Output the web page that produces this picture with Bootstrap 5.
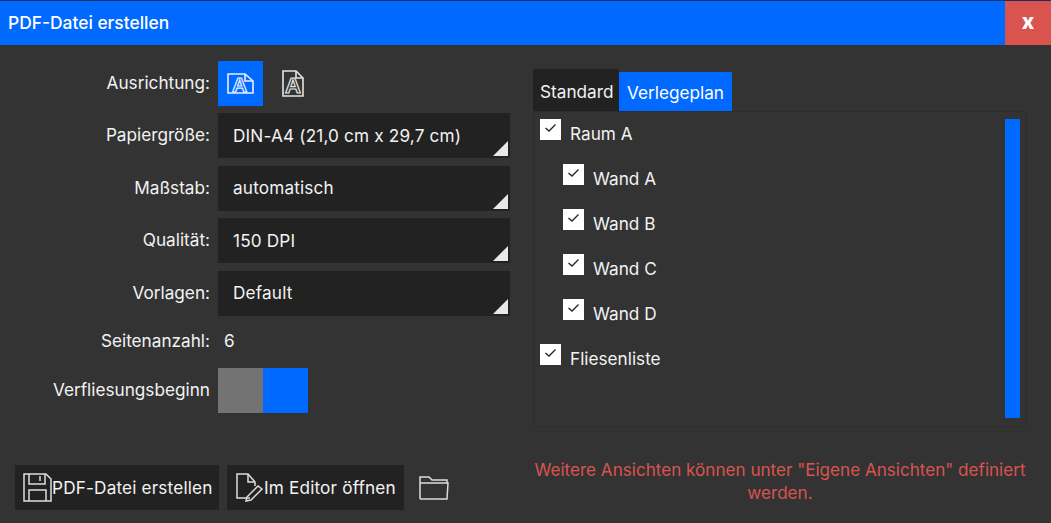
<!DOCTYPE html>
<html lang="de"><head><meta charset="utf-8"><title>PDF-Datei erstellen</title>
<link href="https://cdn.jsdelivr.net/npm/bootstrap@5.3.0/dist/css/bootstrap.min.css" rel="stylesheet">
<style>
html,body{height:100%;margin:0;overflow:hidden}
body{background:#333;color:#f2f2f2;font-family:"Inter","Noto Sans",sans-serif;font-size:17.2px;line-height:1.2}
.dlg{width:1051px;height:523px;display:flex;flex-direction:column;border-top:1px solid #16305c}
.dlg-head{height:44px;background:#0069ff;display:flex;align-items:center;justify-content:space-between;flex:none}
.dlg-title{padding-left:8px;font-size:17.4px;font-weight:500;color:#fff}
.dlg-x{width:46px;height:44px;background:#d9534f;color:#fff;font-weight:800;font-size:21px;border:0;padding:0 0 3px}
.dlg-body{flex:1;display:flex;min-height:0}
.lft{width:533px;flex:none;padding:15.5px 0 13px 15px;display:flex;flex-direction:column}
.rgt{flex:1;padding-top:24px;padding-right:24px;display:flex;flex-direction:column}
.frow{display:flex;align-items:center;margin-bottom:7.5px;min-height:45px}
.frow-text{min-height:37px;margin-bottom:8px}
.flab{width:195px;text-align:right;flex:none;margin-right:8px;white-space:nowrap}
.pagecount{padding-left:6px}
.sel{width:292px;height:45px;background:#222;color:#f2f2f2;position:relative;display:flex;align-items:center;padding:1px 0 0 15px;letter-spacing:.16px}
.sel::after{content:"";position:absolute;right:2px;bottom:2px;border-style:solid;border-width:0 0 15px 15px;border-color:transparent transparent #e8e8e8 transparent}
.sq{width:45px;height:45px;display:flex;align-items:center;justify-content:center}
.sq-on{background:#0069ff}.sq-off{background:#737373}
.sq-shift{padding-left:15px}
.ico-text{font-family:"Liberation Sans",sans-serif;font-weight:700;fill:none}
.tabbar{display:flex;align-items:flex-end;height:42px}
.tb{display:flex;align-items:center;white-space:nowrap}
.tb-a{height:42px;width:86px;background:#222;padding:5px 0 0 7px}
.tb-b{height:39px;background:#0069ff;color:#fff;padding:3px 0 0 8px;width:113px}
.tree{height:316px;border:1px solid #2e2e2e;position:relative;padding:7px 0 0 6px}
.trow{display:flex;align-items:flex-start;height:45px}
.trow.sub{padding-left:23px}
.cbx{width:21px;height:21px;background:#fff;flex:none;margin-right:9px;display:flex;align-items:center;justify-content:center;padding-bottom:3px}
.tlab{padding-top:5px}
.scr{position:absolute;right:6px;top:7px;width:15px;height:299px;background:#0069ff}
.foot{margin-top:auto;display:flex;align-items:center}
.fbtn{height:45px;background:#222;color:#f2f2f2;display:flex;align-items:center;border:0;padding:0 0 0 8px;font-size:17.2px;white-space:nowrap;letter-spacing:.16px}
.fbtn-lab{padding-top:2px}
.fbtn-a{width:204px}.fbtn-b{width:177px}
.fold{margin-left:15px}
.note{color:#d9534f;text-align:center;margin:31px -20px 0;line-height:23px;font-size:17.1px}
</style></head><body>
<div class="dlg">
<div class="dlg-head"><div class="dlg-title">PDF-Datei erstellen</div><button class="dlg-x">x</button></div>
<div class="dlg-body">
<div class="lft">
<div class="frow"><div class="flab">Ausrichtung:</div><div class="sq sq-on">
<svg width="27" height="21" viewBox="0 0 27 21" fill="none" stroke="#e8f0ff" stroke-width="1.6"><path d="M1 1H18L26 8V20H1Z"/><path d="M18 1V8H26"/><text class="ico-text" x="5" y="18.5" font-size="21" stroke="#e8f0ff" stroke-width="1.2">A</text></svg></div>
<div class="sq sq-shift"><svg width="22" height="27" viewBox="0 0 22 27" fill="none" stroke="#e4e4e4" stroke-width="1.6"><path d="M1 1H14L21 8V26H1Z"/><path d="M14 1V8H21"/><text class="ico-text" x="3" y="23" font-size="22" stroke="#e4e4e4" stroke-width="1.2">A</text></svg></div></div>
<div class="frow"><div class="flab">Papiergröße:</div><div class="sel">DIN-A4 (21,0 cm x 29,7 cm)</div></div>
<div class="frow"><div class="flab">Maßstab:</div><div class="sel">automatisch</div></div>
<div class="frow"><div class="flab">Qualität:</div><div class="sel">150 DPI</div></div>
<div class="frow"><div class="flab">Vorlagen:</div><div class="sel">Default</div></div>
<div class="frow frow-text"><div class="flab">Seitenanzahl:</div><div class="pagecount">6</div></div>
<div class="frow"><div class="flab">Verfliesungsbeginn</div><div class="sq sq-off"></div><div class="sq sq-on"></div></div>
<div class="foot">
<button class="fbtn fbtn-a"><svg width="29" height="29" viewBox="0 0 29 29" fill="none" stroke="#ddd" stroke-width="1.5"><path d="M1 1H23L28 6V28H1Z"/><path d="M6 1V11H22V1M17 3V8"/><path d="M6 28V17H23V28"/></svg><span class="fbtn-lab">PDF-Datei erstellen</span></button>
<button class="fbtn fbtn-b ms-2"><svg width="29" height="29" viewBox="0 0 29 29" fill="none" stroke="#ddd" stroke-width="1.5"><path d="M15 25H2V1H13L20 9V13"/><path d="M13 1V9H20"/><path d="M12 24L23 13L27 16L16 27L11 28Z"/></svg><span class="fbtn-lab">Im Editor öffnen</span></button>
<svg class="fold" width="30" height="25" viewBox="0 0 30 25" fill="none" stroke="#ddd" stroke-width="1.5"><path d="M1 24V2H10L13 5H28V8"/><path d="M1 8H29L28 24H1"/></svg>
</div>
</div>
<div class="rgt">
<div class="tabbar"><div class="tb tb-a">Standard</div><div class="tb tb-b">Verlegeplan</div></div>
<div class="tree"><div class="scr"></div>
<div class="trow"><div class="cbx"><svg width="11" height="8" viewBox="0 0 11 8" fill="none" stroke="#222" stroke-width="1.3"><path d="M.5 4L4 7L10.5 .5"/></svg></div><div class="tlab">Raum A</div></div>
<div class="trow sub"><div class="cbx"><svg width="11" height="8" viewBox="0 0 11 8" fill="none" stroke="#222" stroke-width="1.3"><path d="M.5 4L4 7L10.5 .5"/></svg></div><div class="tlab">Wand A</div></div>
<div class="trow sub"><div class="cbx"><svg width="11" height="8" viewBox="0 0 11 8" fill="none" stroke="#222" stroke-width="1.3"><path d="M.5 4L4 7L10.5 .5"/></svg></div><div class="tlab">Wand B</div></div>
<div class="trow sub"><div class="cbx"><svg width="11" height="8" viewBox="0 0 11 8" fill="none" stroke="#222" stroke-width="1.3"><path d="M.5 4L4 7L10.5 .5"/></svg></div><div class="tlab">Wand C</div></div>
<div class="trow sub"><div class="cbx"><svg width="11" height="8" viewBox="0 0 11 8" fill="none" stroke="#222" stroke-width="1.3"><path d="M.5 4L4 7L10.5 .5"/></svg></div><div class="tlab">Wand D</div></div>
<div class="trow"><div class="cbx"><svg width="11" height="8" viewBox="0 0 11 8" fill="none" stroke="#222" stroke-width="1.3"><path d="M.5 4L4 7L10.5 .5"/></svg></div><div class="tlab">Fliesenliste</div></div>
</div>
<div class="note">Weitere Ansichten können unter "Eigene Ansichten" definiert werden.</div>
</div>
</div>
</div>
<script src="https://cdn.jsdelivr.net/npm/bootstrap@5.3.0/dist/js/bootstrap.bundle.min.js"></script>
</body></html>
